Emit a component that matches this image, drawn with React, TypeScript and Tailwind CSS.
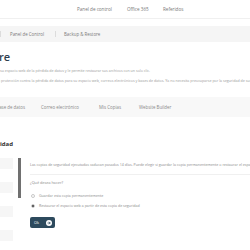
import React from "react";

export default function App() {
  return (
    <div className="w-[250px] h-[250px] overflow-hidden bg-white font-['Open_Sans',sans-serif]">
      {/* top nav */}
      <div className="h-[19px] border-b border-[#f0f0f0] flex items-center pl-[77px] text-[4.6px] text-[#777]">
        <span className="w-[50px] whitespace-nowrap">Panel de control</span>
        <span className="w-[36px] whitespace-nowrap">Office 365</span>
        <span className="whitespace-nowrap">Referidos</span>
      </div>

      {/* breadcrumb */}
      <div className="mt-[7px] h-[16px] bg-[#f5f5f5] flex items-center text-[4.4px] text-[#7a7a7a]">
        <span className="w-px h-[6px] bg-[#dcdcdc]" />
        <span className="ml-[9px] w-[45px] whitespace-nowrap">Panel de Control</span>
        <span className="w-px h-[6px] bg-[#dcdcdc]" />
        <span className="ml-[8px] whitespace-nowrap">Backup &amp; Restore</span>
      </div>

      {/* title */}
      <div className="mt-[9px] w-[10px] flex justify-end">
        <h1 className="whitespace-nowrap text-[11px] leading-[11px] font-semibold text-[#2d3d4d]">
          Backup &amp; Restore
        </h1>
      </div>

      {/* description */}
      <div className="mt-[4px] text-[3.6px] leading-[9.5px] text-[#999]">
        <div className="w-[150px] flex justify-end">
          <p className="whitespace-nowrap">
            Backup &amp; Restore protege su espacio web de la pérdida de datos y le permite restaurar sus archivos con un solo clic.
          </p>
        </div>
        <div className="flex">
          <div className="w-0 flex justify-end">
            <span className="whitespace-nowrap">Backup &amp; Restore le ofrece una</span>
          </div>
          <span className="ml-[1px] whitespace-nowrap">
            protección contra la pérdida de datos para su espacio web, correos electrónicos y bases de datos. Ya no necesita preocuparse por la seguridad de sus datos.
          </span>
        </div>
      </div>

      {/* tabs */}
      <div className="mt-[12px] h-[20px] bg-[#f8f8f8] flex items-center text-[4.4px] text-[#888]">
        <div className="w-[25px] flex justify-end">
          <span className="whitespace-nowrap">Base de datos</span>
        </div>
        <span className="ml-[16px] w-[58px] whitespace-nowrap">Correo electrónico</span>
        <span className="w-[40px] whitespace-nowrap">Mis Copias</span>
        <span className="whitespace-nowrap">Website Builder</span>
      </div>

      {/* heading */}
      <div className="mt-[23px] w-[13px] flex justify-end">
        <h2 className="whitespace-nowrap text-[6px] leading-[8px] font-bold text-[#333]">Copias de seguridad</h2>
      </div>

      {/* content */}
      <div className="mt-[10px] flex">
        <div className="w-[13px] shrink-0 flex flex-col gap-[13px]">
          <div className="h-[11px] bg-[#f6f6f6]" />
          <div className="h-[11px] bg-[#f6f6f6]" />
          <div className="h-[11px] bg-[#f6f6f6]" />
          <div className="h-[11px] bg-[#f6f6f6]" />
        </div>
        <div className="ml-[5px] w-[3px] h-[40px] shrink-0 bg-[#707070]" />
        <div className="ml-[9px] flex-1 min-w-0 text-[#8a8a8a]">
          <div className="pt-[4px] pb-[6px] leading-[6px] border-b border-[#f0f0f0] text-[3.6px] whitespace-nowrap">
            Las copias de seguridad ejecutadas caducan pasados 14 días. Puede elegir si guardar la copia permanentemente o restaurar el espacio web.
          </div>
          <div className="pt-[5px] leading-[6px] text-[3.8px]">¿Qué desea hacer?</div>
          <div className="mt-[6px] h-[7px] flex items-center text-[3.6px] whitespace-nowrap">
            <span className="ml-[1px] w-[4px] h-[4px] rounded-full border-[0.5px] border-[#c8c8c8] bg-white" />
            <span className="ml-[4px]">Guardar esta copia permanentemente</span>
          </div>
          <div className="mt-[3px] h-[7px] flex items-center text-[3.6px] whitespace-nowrap">
            <span className="ml-[1px] w-[4px] h-[4px] rounded-full border-[0.5px] border-[#c8c8c8] bg-white flex items-center justify-center">
              <span className="w-[2px] h-[2px] rounded-full bg-[#333]" />
            </span>
            <span className="ml-[4px]">Restaurar el espacio web a partir de esta copia de seguridad</span>
          </div>
          <button className="mt-[8px] w-[25px] h-[11px] bg-[#2d4a5d] rounded-[2px] flex items-center pl-[4px] text-white text-[3.8px]">
            <span>Ok</span>
            <svg className="ml-auto mr-[3px]" width="6" height="6" viewBox="0 0 12 12">
              <circle cx="6" cy="6" r="6" fill="#fff" />
              <path d="M3 6h5.5M6 3.5 8.5 6 6 8.5" stroke="#2d4a5d" strokeWidth="1.6" fill="none" />
            </svg>
          </button>
        </div>
      </div>
    </div>
  );
}
